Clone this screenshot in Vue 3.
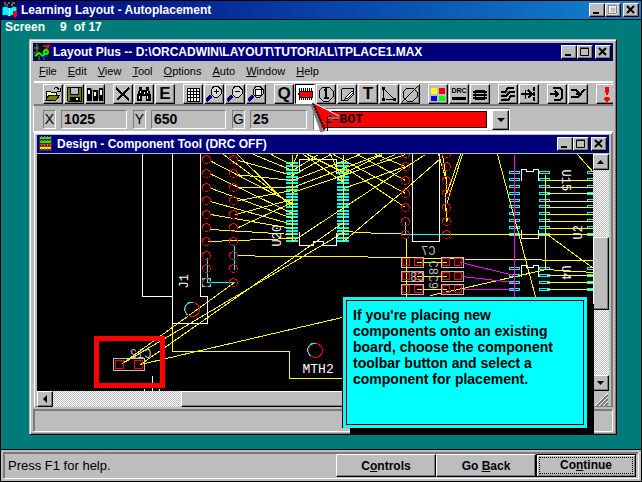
<script setup>
import { ref } from 'vue'

const menus = ['File', 'Edit', 'View', 'Tool', 'Options', 'Auto', 'Window', 'Help']
const x = ref('1025')
const y = ref('650')
const grid = ref('25')
const layer = ref('2-BOT')

const K = '#000'
const W = '#fff'
const N = 'none'
const lens = [
  ['M8 .5h4l3.500 3.500v3.500l-3.500 3.500h-4l-3-3v-4z', '#d8d8d8', K, 1],
  ['M5 10l-5 5', N, '#00007b', 3],
]
// Each shape: [path, fill, stroke, stroke width]
const groups = [
  [
    { name: 'Open', shapes: [['M1 14V5h4l1 1h5v3', '#ffff9c', K, 1], ['M1 14l3-5h11l-4 5z', '#7b7b00', K, 1], ['M9 3c2-2 4-2 5 1M15 2v3h-3', N, K, 1]] },
    { name: 'Save', shapes: [['M1 1h14v14H2l-1-1z', '#7b7b00', K, 1], ['M4 1h8v7H4z', '#bdbdbd', K, 1], ['M4 11h9v4H4z', K, K, 1], ['M10 12h2v2h-2z', W, N, 0]] },
    { name: 'Library', shapes: [['M0 2h5v13H0zM6 4h5v11H6zM12 2h4v13h-4z', K, N, 0], ['M1 4h2v4H1zM7 6h2v4H7zM13 4h2v5h-2z', W, N, 0], ['M4 2l2 3M11 4v9', N, '#7b7b7b', 1]] },
  ],
  [
    { name: 'Delete', shapes: [['M1 2l13 12M14 2L2 14', N, K, 2]] },
    { name: 'Find', shapes: [['M3 1h3v3h4V1h3v3l2 5v6h-5v-5H6v5H1V9l2-5z', K, N, 0], ['M4 5v2M3 10v3M11 5v2M11 10v3M8 6v2', N, W, 1]] },
    { name: 'Edit', text: 'E', size: 17 },
  ],
  [
    { name: 'Spreadsheet', shapes: [['M2 2h12v13H2zM2 5h12M2 8h12M2 11h12M5 2v13M8 2v13M11 2v13', W, K, 1]] },
    { name: 'Zoom in', shapes: [...lens, ['M7.500 5.500h5M10 3v5', N, K, 1]] },
    { name: 'Zoom out', shapes: [...lens, ['M7.500 5.500h5', N, K, 1]] },
    { name: 'Zoom all', shapes: [...lens, ['M7 3h6v6H7z', W, K, 1]] },
  ],
  [
    { name: 'Query', text: 'Q', size: 16 },
    { name: 'Component tool', on: true, shapes: [['M2 2v12M4 2v12M6 2v12M8 2v12M10 2v12M12 2v12M14 2v12', N, K, 1], ['M2 5h13v6H2z', '#f00', K, 1], ['M1 8h2', N, K, 2]] },
    { name: 'Pin tool', shapes: [['M5 1h6l4 4v6l-4 4H5l-4-4V5z', N, K, 1], ['M6 5l2-2v9M6 12h5', N, K, 2]] },
    { name: 'Obstacle tool', shapes: [['M2 14V4l2-2h10v7l-5 5z', N, K, 1], ['M7 11l6-6 2 1-6 6-3 1z', W, K, 1]] },
    { name: 'Text tool', text: 'T', size: 17 },
    { name: 'Connection tool', shapes: [['M1 1h3v3H1zM1 12h3v3H1zM12 12h3v3h-3z', K, N, 0], ['M2.500 4v8M4 4l9 9M5 13.500h7', N, K, 1]] },
    { name: 'Error tool', shapes: [['M5 2h6l4 4v5l-4 4H5l-4-4V6zM0 16L16 0', N, K, 1]] },
  ],
  [
    { name: 'Colors', shapes: [['M1 2h6v6H1z', '#ff0', N, 0], ['M9 2h6v6H9z', '#f00', N, 0], ['M1 10h6v5H1z', '#00f', N, 0], ['M9 10h6v5H9z', '#0f0', N, 0]] },
    { name: 'Online DRC', text: 'DRC', size: 7, shapes: [['M1 11h14v3H1z', K, N, 0]] },
    { name: 'Reconnect', shapes: [['M3 4h10v10H3z', K, N, 0], ['M1 6h14M1 9h14M1 12h14', N, K, 2], ['M4 7.500h8M4 10.500h8', N, '#bdbdbd', 1]] },
  ],
  [
    { name: 'Auto path', shapes: [['M1 6h4l3-4h6M1 10h5l4-4h5M1 14h7l3-4h4', N, K, 2], ['M2 8h3l4-3M3 12h4', N, '#7b7b7b', 1]] },
    { name: 'Shove track', shapes: [['M0 8h10M7 4l4 4-4 4', N, K, 2], ['M4 4v3M4 9v4', N, K, 1], ['M13 1v4M13 6v4M13 11v4', N, K, 2]] },
  ],
  [
    { name: 'Edit segment', shapes: [['M1 8h8M6 5l3 3-3 3M4 2h7l2 2v8l-2 2H5', N, K, 2]] },
    { name: 'Add route', shapes: [['M1 4h5l4 4M1 11h7l7-8M6 8h6', N, K, 2]] },
  ],
  [{ name: 'Refresh', shapes: [['M7 1h4v4l-1 4H8L7 5zM7 11h4l1 2-2 3H8l-2-3z', '#f00', N, 0]] }],
]

const range = (n) => [...Array(n).keys()]
const holeRows = [159, 173, 187, 200, 214, 227, 241, 255, 268, 282]
const headerRows = [153, 166, 180, 193, 207, 221, 234]
const pinRows = [173, 180, 187, 194, 201, 207, 214, 221, 228, 235, 269, 276, 283, 290]
const capRows = [262, 276, 289]
const nets = `
M211 161L292 203M211 174L292 213M211 188L292 218M210 201L292 224M210 214L292 228M210 229L292 234M208 241L292 238
M238 160L292 175M235 174L292 180M238 187H292M238 200L292 190M235 214L292 199M238 227L292 202
M223 154L292 205M237 154L292 208M253 154L292 170M271 154L292 165
M292 165L297 154M292 175L330 154M292 180L360 154M292 187L380 154M292 192L405 154M292 170L318 154
M303 154L343 182M330 154L343 182M307 154L343 172M333 154L405 193M357 154L405 180M343 173L382 154
M292 241L400 170L425 154M343 241L400 193L440 158M343 231L380 233H395L405 234M238 255L271 256H343L488 259L593 260
M122 363L234 282M122 363L343 232M140 364L343 222M140 364L346 316
M343 166L405 207M380 160L395 154M343 188L405 166M375 154L405 166
M438 154L446 180L445 207L447 221M442 154L446 180M462 154L446 204M460 154L446 194M446 207V221
M406 238V300M446 234H593M497 154L536 300M545 174V269M577 154L593 172M547 234L593 268M546 269L593 272M430 295L462 288L546 269
M546 180H593M546 187H593M546 193H593M546 201H593M546 207H593M546 214H593M546 221H593M546 228H593
M546 275H593M546 282H593M546 289H593M416 262H446M416 276H446M416 289H446
M172 323V351H289V378H346M292 154V241M343 154V241`
</script>

<template>
  <main class="app">
    <header class="title outer">
      <svg class="logo" width="16" height="16" viewBox="0 0 16 16">
        <path d="M1 0h14v6H1z" fill="#111" /><path d="M2 1h2M6 1h2M10 1h3M3 3h3M9 3h2" stroke="#bdbdbd" />
        <path d="M0 5l4-1 4 2 4-2 3 1v9l-4-1-4 2-3-2-4 1z" fill="#0ff" stroke="#00007b" />
        <path d="M7.500 6v8" stroke="#fff" /><path d="M11 9h4v5l-2 2-2-2z" fill="#f00" />
      </svg>
      <h1>Learning Layout - Autoplacement</h1>
      <span class="controls">
        <button aria-label="Minimize"><svg width="12" height="10"><path d="M2 8h6" stroke="#000" stroke-width="2" /></svg></button>
        <button aria-label="Maximize" disabled><svg width="12" height="10"><path d="M2.500 1.500h7v7h-7z" fill="none" stroke="#fff" stroke-width="2" /><path d="M1.500 .5h8v8h-8z" fill="none" stroke="#848484" /></svg></button>
        <button aria-label="Close" class="close"><svg width="12" height="10"><path d="M2 1l7 7M9 1L2 8" stroke="#000" stroke-width="2" /></svg></button>
      </span>
    </header>

    <section class="lesson">
      <p class="counter"><span>Screen</span><span>9</span><span>of 17</span></p>

      <div class="window">
        <header class="title">
          <svg class="logo" width="16" height="16" viewBox="0 0 16 16">
            <path d="M0 0h16v16H0z" fill="#111" /><path d="M0 4h5M3 0v8M0 9h4M9 2h5M5 12v4M10 12v4" stroke="#848484" />
            <path d="M11 5l3-5 2 1-2 4z" fill="#f00" /><path d="M1 12l4-3 4 3 2-3" fill="none" stroke="#0f0" stroke-width="2" />
            <circle cx="12" cy="8" r="2" fill="none" stroke="#0f0" stroke-width="2" /><path d="M8 14l6-2" stroke="#00f" stroke-width="2" />
          </svg>
          <h2>Layout Plus -- D:\ORCADWIN\LAYOUT\TUTORIAL\TPLACE1.MAX</h2>
          <span class="controls">
            <button aria-label="Minimize"><svg width="12" height="10"><path d="M2 8h6" stroke="#000" stroke-width="2" /></svg></button>
            <button aria-label="Maximize"><svg width="12" height="10"><path d="M1.500 1.500h8v7h-8zM1 1h9" fill="none" stroke="#000" /></svg></button>
            <button aria-label="Close" class="close"><svg width="12" height="10"><path d="M2 1l7 7M9 1L2 8" stroke="#000" stroke-width="2" /></svg></button>
          </span>
        </header>

        <nav class="menu">
          <button v-for="m in menus" :key="m"><u>{{ m[0] }}</u>{{ m.slice(1) }}</button>
        </nav>

        <div class="toolbar">
          <div v-for="(g, i) in groups" :key="i" class="group">
            <button v-for="t in g" :key="t.name" :aria-label="t.name" class="tool" :class="{ on: t.on, small: t.size < 10, letter: t.size > 10 }">
              <svg v-if="t.shapes" width="16" height="16" viewBox="0 0 16 16" shape-rendering="crispEdges">
                <path v-for="(s, j) in t.shapes" :key="j" :d="s[0]" :fill="s[1]" :stroke="s[2]" :stroke-width="s[3]" />
                <text v-if="t.text" x="8" y="7" text-anchor="middle">{{ t.text }}</text>
              </svg>
              <template v-else>{{ t.text }}</template>
            </button>
          </div>
        </div>

        <form class="fields" @submit.prevent>
          <label for="fx">X</label><input id="fx" v-model="x">
          <label for="fy">Y</label><input id="fy" v-model="y" class="wide">
          <label for="fg">G</label><input id="fg" v-model="grid" class="short">
          <div class="combo">
            <select v-model="layer" aria-label="Layer"><option>2-BOT</option></select>
            <svg class="drop" width="17" height="20"><path d="M4 7h8l-4 4z" /></svg>
          </div>
        </form>

        <section class="child">
          <header class="title">
            <svg class="logo" width="16" height="16" viewBox="0 0 16 16" shape-rendering="crispEdges">
              <path d="M1 1h13v14H1z" fill="#333" /><path d="M2 2h11M2 6h11" stroke="#0f0" stroke-width="2" />
              <path d="M2 4h11M2 8h11M2 10h11" stroke="#f00" /><path d="M2 12h11" stroke="#ff0" stroke-width="2" />
              <path d="M3 0v16M6 0v16M9 0v16M12 0v16" stroke="#848484" stroke-dasharray="2 2" />
            </svg>
            <h2>Design - Component Tool (DRC OFF)</h2>
            <span class="controls">
              <button aria-label="Minimize"><svg width="12" height="10"><path d="M2 8h6" stroke="#000" stroke-width="2" /></svg></button>
              <button aria-label="Maximize"><svg width="12" height="10"><path d="M1.500 1.500h8v7h-8zM1 1h9" fill="none" stroke="#000" /></svg></button>
              <button aria-label="Close" class="close"><svg width="12" height="10"><path d="M2 1l7 7M9 1L2 8" stroke="#000" stroke-width="2" /></svg></button>
            </span>
          </header>

          <div class="work">
            <svg class="board" width="100%" height="100%" role="img" aria-label="Circuit board">
              <g transform="translate(-37 -154)" fill="#0ff" shape-rendering="crispEdges">
                <template v-for="i in range(24)" :key="i">
                  <rect x="286" :y="162 + Math.round(i * 3.4)" width="12" height="2" />
                  <rect x="337" :y="162 + Math.round(i * 3.4)" width="12" height="2" />
                </template>
              </g>
              <g transform="translate(-36.500 -153.500)" fill="none" stroke-width="1" shape-rendering="crispEdges">
                <g stroke="#0ff">
                  <path d="M207 257V282H234M234 244V269M405 221V234H446M202 278h8v8h-8z" />
                  <template v-for="r in pinRows" :key="r">
                    <path :d="`M509 ${r - 2}h10v2h-10zM539 ${r - 2}h10v2h-10zM587 ${r - 2}h9v2h-9z`" />
                  </template>
                </g>
                <path stroke="#fff" d="M142 150V296H172M172 150V323H207V296H200V150M299 172V159H336V173M299 231V245H313V241H323V245H336V232M412 150V241H439V150M521 180V169H526V171H533V169H538V180M521 229V238H538V229M521 276V265H526V267H533V265H538V276M144 388V391M152 375V391M159 388V391" />
                <path stroke="#bdbdbd" d="M113 358H144V370H113z" />
                <path v-for="r in capRows" :key="r" stroke="#bdbdbd" :d="`M401 ${r - 5}h22v10h-22zM441 ${r - 5}h22v10h-22z`" />
                <path stroke="#ff0" :d="nets" />
                <path stroke="#f0f" d="M514 154V300M460 262L514 275M461 276L514 282M463 289H514" />
                <g stroke="#f00">
                  <template v-for="r in holeRows" :key="r">
                    <circle cx="206" :cy="r" r="4" /><circle cx="233" :cy="r" r="4" />
                  </template>
                  <template v-for="r in headerRows" :key="r">
                    <circle cx="405" :cy="r" r="4" /><circle cx="446" :cy="r" r="4" />
                  </template>
                  <path v-for="r in capRows" :key="r" :d="`M402 ${r - 4}h7v7h-7zM414 ${r - 4}h8v7h-8zM442 ${r - 4}h7v7h-7zM454 ${r - 4}h7v7h-7z`" />
                  <path d="M115 360h8v8h-8zM134 360h8v8h-8z" />
                  <circle cx="192" cy="309" r="7" /><circle cx="315" cy="350" r="7" />
                </g>
                <path stroke="#0ff" d="M193 302a7 7 0 0 0-5 13M316 343a7 7 0 0 0-5 13" />
                <g class="refs" fill="#fff">
                  <text transform="translate(187 288) rotate(-90)">J1</text>
                  <text transform="translate(280 246) rotate(-90)">U20</text>
                  <text transform="translate(561 169) rotate(90)">U15</text>
                  <text transform="translate(581 239) rotate(-90)">U2</text>
                  <text transform="translate(561 265) rotate(90)">U4</text>
                  <text class="hole" x="302" y="372">MTH2</text>
                </g>
                <g class="refs" fill="#bdbdbd">
                  <text transform="translate(435 254) scale(-1 1)">C7</text>
                  <text transform="translate(151 357) scale(-1 1)">C12</text>
                  <text transform="translate(428 260) rotate(90)">C8C9</text>
                  <text transform="translate(424 280) scale(-1 1)">C8</text>
                </g>
              </g>
              <path stroke="#f00" stroke-width="5" fill="none" d="M59.500 184.500h66v47h-66z" />
            </svg>
            <div class="scroll vertical">
              <button aria-label="Scroll up"><svg width="12" height="12"><path d="M2 8h7L5.500 4z" /></svg></button>
              <i class="thumb" />
              <button aria-label="Scroll down" class="end"><svg width="12" height="12"><path d="M2 4h7L5.500 8z" /></svg></button>
            </div>
          </div>
          <div class="bottom">
            <div class="scroll horizontal">
              <button aria-label="Scroll left"><svg width="12" height="12"><path d="M8 2v8L4 6z" /></svg></button>
              <i class="thumb" />
            </div>
            <svg class="grip" width="16" height="16"><path d="M4 15L15 4M8 15l7-7M12 15l3-3" stroke="#7b7b7b" stroke-width="2" /><path d="M2 15L15 2M6 15l9-9M10 15l5-5" stroke="#fff" /></svg>
          </div>
        </section>
        <div class="status" />
      </div>

      <svg class="pointer" width="32" height="34" viewBox="311 101 32 34">
        <path d="M312 102L338 115L327 116V121L324 132z" fill="#f00" />
        <path d="M312 104L322 132" stroke="#7b7b7b" stroke-width="3" />
        <path d="M313 103L325 130" stroke="#000" stroke-width="2" stroke-dasharray="2 1" />
        <path d="M327.500 131V117" stroke="#000" /><path d="M328 118h11" stroke="#7b7b7b" stroke-width="2" />
        <path d="M312 102L339 116" stroke="#fff" />
      </svg>
      <aside class="callout">
        <p>If you're placing new components onto an existing board, choose the component toolbar button and select a component for placement.</p>
      </aside>
    </section>

    <footer class="footer">
      <div class="panel">
        <p>Press F1 for help.</p>
        <button>C<u>o</u>ntrols</button>
        <button>Go <u>B</u>ack</button>
        <button class="default"><span>Co<u>n</u>tinue</span></button>
      </div>
    </footer>
  </main>
</template>

<style>
body { margin: 0; background: #000; }
</style>

<style scoped>
* { box-sizing: border-box; }
.app { display: flex; flex-direction: column; min-height: 100vh; border: 1px solid #000; background: #bdbdbd; color: #000; font: 12px/16px "Liberation Sans", Arial, sans-serif; }
h1, h2, p { margin: 0; }
h1, h2 { flex: 1; min-width: 0; overflow: hidden; white-space: nowrap; font-size: 12px; line-height: 16px; font-weight: bold; color: #fff; }
button { padding: 0; margin: 0; font: inherit; color: inherit; background: #bdbdbd; border: 0; border-radius: 0; }
svg { display: block; flex: none; }

.title { display: flex; align-items: center; height: 18px; padding: 0 2px 0 1px; gap: 3px; background: #00007b; }
.outer { height: 19px; border-bottom: 1px solid #000; background: linear-gradient(90deg, #00007b, #0842a5 50%, #1084ce); }
.controls { display: flex; }
.controls button { width: 16px; height: 14px; display: flex; align-items: center; justify-content: center; border: 1px solid; border-color: #fff #000 #000 #fff; box-shadow: inset -1px -1px #7b7b7b; }
.controls .close { margin-left: 2px; }

.lesson { position: relative; flex: 1; display: flex; flex-direction: column; padding: 0 24px 14px 28px; background: #007b7b; border-bottom: 1px solid #000; }
.counter { height: 19px; margin-left: -24px; display: flex; gap: 7px; font-weight: bold; line-height: 15px; color: #fff; }
.counter span:first-child { margin-right: 8px; }

.window { flex: 1; display: flex; flex-direction: column; padding: 3px 3px 2px; background: #bdbdbd; border: 1px solid; border-color: #bdbdbd #000 #000 #bdbdbd; box-shadow: inset 1px 1px #fff, inset -1px -1px #7b7b7b; }
.menu { display: flex; align-items: center; height: 20px; gap: 11px; padding-left: 6px; font-size: 11px; }
u { text-underline-offset: 1px; text-decoration-thickness: 1px; }

.toolbar { display: flex; gap: 7px; height: 25px; padding: 1px 0 2px 9px; overflow: hidden; border-top: 2px solid #fff; border-bottom: 2px solid #7b7b7b; margin-left: 1px; }
.group { display: flex; flex: none; gap: 1px; padding-right: 1px; }
.group:not(:last-child) { margin-right: -1px; }
.group + .group { margin-left: 1px; }
.tool { width: 20px; height: 20px; padding: 1px; border: 1px solid; border-color: #fff #000 #000 #fff; box-shadow: inset -1px -1px #7b7b7b; }
.tool.on { background: #fff; border-color: #000 #fff #fff #000; box-shadow: none; }
.tool.letter { font-size: 17px; line-height: 16px; font-weight: bold; }
.tool.small text { font: bold 7px "Liberation Sans", Arial, sans-serif; }

.fields { display: flex; align-items: center; height: 25px; padding: 1px 0 0 9px; font-size: 14px; border-left: 1px solid #fff; }
.fields label { width: 13px; height: 19px; margin-right: 5px; line-height: 17px; text-align: center; border: 1px solid; border-color: #7b7b7b #fff #fff #7b7b7b; }
.fields input { width: 66px; height: 19px; margin: 0 6px 0 0; padding: 0 2px; font: bold 14px/17px "Liberation Sans", Arial, sans-serif; color: #000; background: #bdbdbd; border: 1px solid; border-color: #7b7b7b #fff #fff #7b7b7b; border-radius: 0; }
.fields .wide { width: 75px; }
.fields .short { width: 57px; }
.combo { display: flex; width: 197px; height: 22px; padding: 1px; background: #fff; border-top: 1px solid #7b7b7b; border-left: 1px solid #7b7b7b; }
select { flex: 1; min-width: 0; margin: 1px 5px 1px 4px; padding: 0 4px; appearance: none; background: #f00; color: #000; border: 1px solid #000; border-radius: 0; font: bold 13px/14px "Liberation Mono", "Courier New", monospace; }
.drop { background: #bdbdbd; border: 1px solid; border-color: #fff #000 #000 #fff; box-shadow: inset -1px -1px #7b7b7b; }

.child { flex: 1; display: flex; flex-direction: column; padding: 2px 3px 0; border: 1px solid #bdbdbd; box-shadow: inset 1px 1px #fff, inset -1px -1px #7b7b7b; border-top: 2px solid #fff; border-right-color: #7b7b7b; }
.child .title { margin-bottom: 1px; }
.work { flex: 1; display: flex; min-height: 237px; }
.board { flex: 1; width: 0; min-width: 0; height: auto; background: #000; }
.refs text { stroke: none; font: 12px "Liberation Mono", "Courier New", monospace; }
.refs .hole { font-size: 13px; }
.scroll { display: flex; background: repeating-conic-gradient(#fff 0 25%, #bdbdbd 0 50%) 0 0 / 2px 2px; }
.scroll button, .thumb { flex: none; width: 16px; height: 16px; padding: 1px; background: #bdbdbd; border: 1px solid; border-color: #fff #000 #000 #fff; box-shadow: inset -1px -1px #7b7b7b; }
.vertical { width: 16px; flex-direction: column; }
.vertical .thumb { margin-top: 67px; height: 73px; }
.vertical .end { margin-top: auto; }
.bottom { display: flex; height: 16px; }
.horizontal { flex: 1; }
.horizontal .thumb { flex: 1; margin-left: 128px; }
.status { height: 23px; margin-top: 1px; border: 1px solid; border-color: #7b7b7b #fff #fff #7b7b7b; box-shadow: inset 1px 1px #7b7b7b; }

.callout { position: absolute; right: 54px; bottom: 21px; width: 244px; height: 131px; padding: 3px; background: #0ff; box-shadow: -1px 0 #000, 7px 7px #000; }
.callout p { height: 125px; padding: 6px; border: 1px solid #000; font-weight: bold; font-size: 14px; line-height: 16px; }
.pointer { position: absolute; left: 310px; top: 81px; }

.footer { padding: 2px; }
.panel { display: flex; height: 27px; padding: 1px 2px 1px 1px; border: 1px solid; border-color: #7b7b7b #fff #fff #7b7b7b; box-shadow: inset 1px 1px #7b7b7b; }
.panel p { flex: 1; padding-left: 3px; font-size: 13px; line-height: 23px; }
.panel button { width: 100px; height: 23px; font-weight: bold; border: 1px solid; border-color: #fff #000 #000 #fff; box-shadow: inset -1px -1px #7b7b7b; }
.panel .default { padding: 2px; border-color: #000; box-shadow: inset 1px 1px #fff, inset -1px -1px #7b7b7b; }
.default span { display: block; height: 17px; line-height: 15px; border: 1px dotted #000; }
</style>
